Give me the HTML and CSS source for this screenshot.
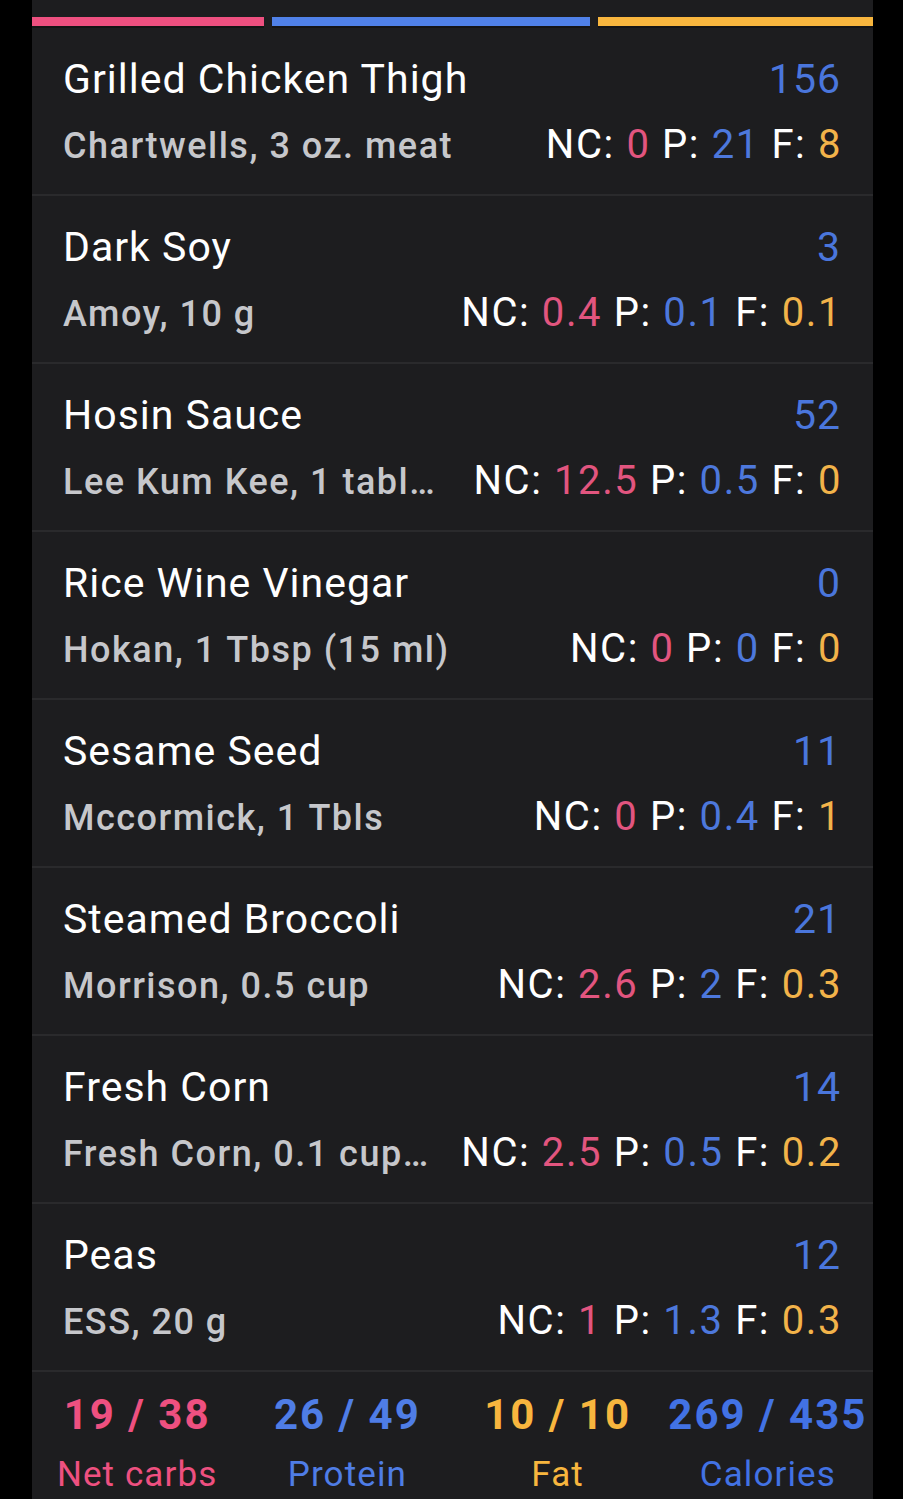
FILE: index.html
```html
<!DOCTYPE html>
<html lang="en">
<head>
    <meta charset="UTF-8">
    <meta name="viewport" content="width=device-width, initial-scale=1.0">
    <title>Meal</title>
    <link rel="stylesheet" href="styles.css">
</head>
<body>
    <div class="meal-panel">
        <!-- calorie split: carbs 19*4, protein 26*4, fat 10*9 -->
        <div class="macro-bars">
            <div class="bar carbs" style="flex-grow: 76"></div>
            <div class="bar protein" style="flex-grow: 104"></div>
            <div class="bar fat" style="flex-grow: 90"></div>
        </div>

        <div class="food-list">
            <div class="food-row">
                <div class="food-top">
                    <span class="food-name">Grilled Chicken Thigh</span>
                    <span class="food-cal">156</span>
                </div>
                <div class="food-bottom">
                    <span class="food-serving">Chartwells, 3 oz. meat</span>
                    <span class="food-macros">NC: <span class="nc">0</span> P: <span class="p">21</span> F: <span class="f">8</span></span>
                </div>
            </div>
            <div class="food-row">
                <div class="food-top">
                    <span class="food-name">Dark Soy</span>
                    <span class="food-cal">3</span>
                </div>
                <div class="food-bottom">
                    <span class="food-serving">Amoy, 10 g</span>
                    <span class="food-macros">NC: <span class="nc">0.4</span> P: <span class="p">0.1</span> F: <span class="f">0.1</span></span>
                </div>
            </div>
            <div class="food-row">
                <div class="food-top">
                    <span class="food-name">Hosin Sauce</span>
                    <span class="food-cal">52</span>
                </div>
                <div class="food-bottom">
                    <span class="food-serving">Lee Kum Kee, 1 tablespoon (15 ml)</span>
                    <span class="food-macros">NC: <span class="nc">12.5</span> P: <span class="p">0.5</span> F: <span class="f">0</span></span>
                </div>
            </div>
            <div class="food-row">
                <div class="food-top">
                    <span class="food-name">Rice Wine Vinegar</span>
                    <span class="food-cal">0</span>
                </div>
                <div class="food-bottom">
                    <span class="food-serving">Hokan, 1 Tbsp (15 ml)</span>
                    <span class="food-macros">NC: <span class="nc">0</span> P: <span class="p">0</span> F: <span class="f">0</span></span>
                </div>
            </div>
            <div class="food-row">
                <div class="food-top">
                    <span class="food-name">Sesame Seed</span>
                    <span class="food-cal">11</span>
                </div>
                <div class="food-bottom">
                    <span class="food-serving">Mccormick, 1 Tbls</span>
                    <span class="food-macros">NC: <span class="nc">0</span> P: <span class="p">0.4</span> F: <span class="f">1</span></span>
                </div>
            </div>
            <div class="food-row">
                <div class="food-top">
                    <span class="food-name">Steamed Broccoli</span>
                    <span class="food-cal">21</span>
                </div>
                <div class="food-bottom">
                    <span class="food-serving">Morrison, 0.5 cup</span>
                    <span class="food-macros">NC: <span class="nc">2.6</span> P: <span class="p">2</span> F: <span class="f">0.3</span></span>
                </div>
            </div>
            <div class="food-row">
                <div class="food-top">
                    <span class="food-name">Fresh Corn</span>
                    <span class="food-cal">14</span>
                </div>
                <div class="food-bottom">
                    <span class="food-serving">Fresh Corn, 0.1 cup (cut)</span>
                    <span class="food-macros">NC: <span class="nc">2.5</span> P: <span class="p">0.5</span> F: <span class="f">0.2</span></span>
                </div>
            </div>
            <div class="food-row">
                <div class="food-top">
                    <span class="food-name">Peas</span>
                    <span class="food-cal">12</span>
                </div>
                <div class="food-bottom">
                    <span class="food-serving">ESS, 20 g</span>
                    <span class="food-macros">NC: <span class="nc">1</span> P: <span class="p">1.3</span> F: <span class="f">0.3</span></span>
                </div>
            </div>
        </div>

        <div class="totals">
            <div class="total carbs-text">
                <div class="total-value">19 / 38</div>
                <div class="total-label">Net carbs</div>
            </div>
            <div class="total protein-text">
                <div class="total-value">26 / 49</div>
                <div class="total-label">Protein</div>
            </div>
            <div class="total fat-text">
                <div class="total-value">10 / 10</div>
                <div class="total-label">Fat</div>
            </div>
            <div class="total cal-text">
                <div class="total-value">269 / 435</div>
                <div class="total-label">Calories</div>
            </div>
        </div>
    </div>
</body>
</html>
```

FILE: styles.css
```css
body {
    margin: 0;
    background-color: #000;
    font-family: Roboto, 'Noto Sans', sans-serif;
    color: #fff;
}
.meal-panel {
    width: 841px;
    margin-left: 32px;
    min-height: 1499px;
    background-color: #1d1d1f;
}
.macro-bars {
    display: flex;
    gap: 8px;
    padding-top: 17px;
    margin-bottom: 2px;
}
.bar {
    flex-basis: 0;
    height: 9px;
    box-shadow: 0 2px 0 rgba(0, 0, 0, 0.3);
}
.bar.carbs {
    background-color: #ee5080;
}
.bar.protein {
    background-color: #5081e8;
}
.bar.fat {
    background-color: #f8b63e;
}
.food-row {
    box-sizing: border-box;
    height: 168px;
    padding: 27px 32px 0 31px;
    border-bottom: 2px solid #2a2a2c;
}
.food-top,
.food-bottom {
    display: flex;
    align-items: baseline;
}
.food-top {
    justify-content: space-between;
    font-size: 41px;
    line-height: 48px;
    letter-spacing: 1px;
    margin-bottom: 20px;
}
.food-cal {
    color: #4a76dc;
}
.food-bottom {
    line-height: 44px;
}
.food-serving {
    flex: 1;
    min-width: 0;
    font-size: 36px;
    font-weight: 500;
    letter-spacing: 1.5px;
    color: #c6c7cb;
    white-space: nowrap;
    overflow: hidden;
    text-overflow: ellipsis;
}
.food-macros {
    margin-left: 26px;
    margin-right: -1px;
    font-size: 40px;
    letter-spacing: 1.6px;
    white-space: nowrap;
}
.nc {
    color: #e2557f;
}
.p {
    color: #4d78dc;
}
.f {
    color: #f2b34a;
}
.totals {
    display: grid;
    grid-template-columns: repeat(4, 1fr);
    padding-top: 17px;
    text-align: center;
}
.total-value {
    font-size: 42px;
    font-weight: 700;
    line-height: 52px;
    letter-spacing: 2px;
    white-space: nowrap;
}
.total-label {
    margin-top: 12px;
    font-size: 35px;
    line-height: 44px;
    letter-spacing: 1.1px;
}
.carbs-text {
    color: #ee5080;
}
.protein-text {
    color: #4f7de6;
}
.fat-text {
    color: #f8b63e;
}
.cal-text {
    color: #4272e4;
}
```
